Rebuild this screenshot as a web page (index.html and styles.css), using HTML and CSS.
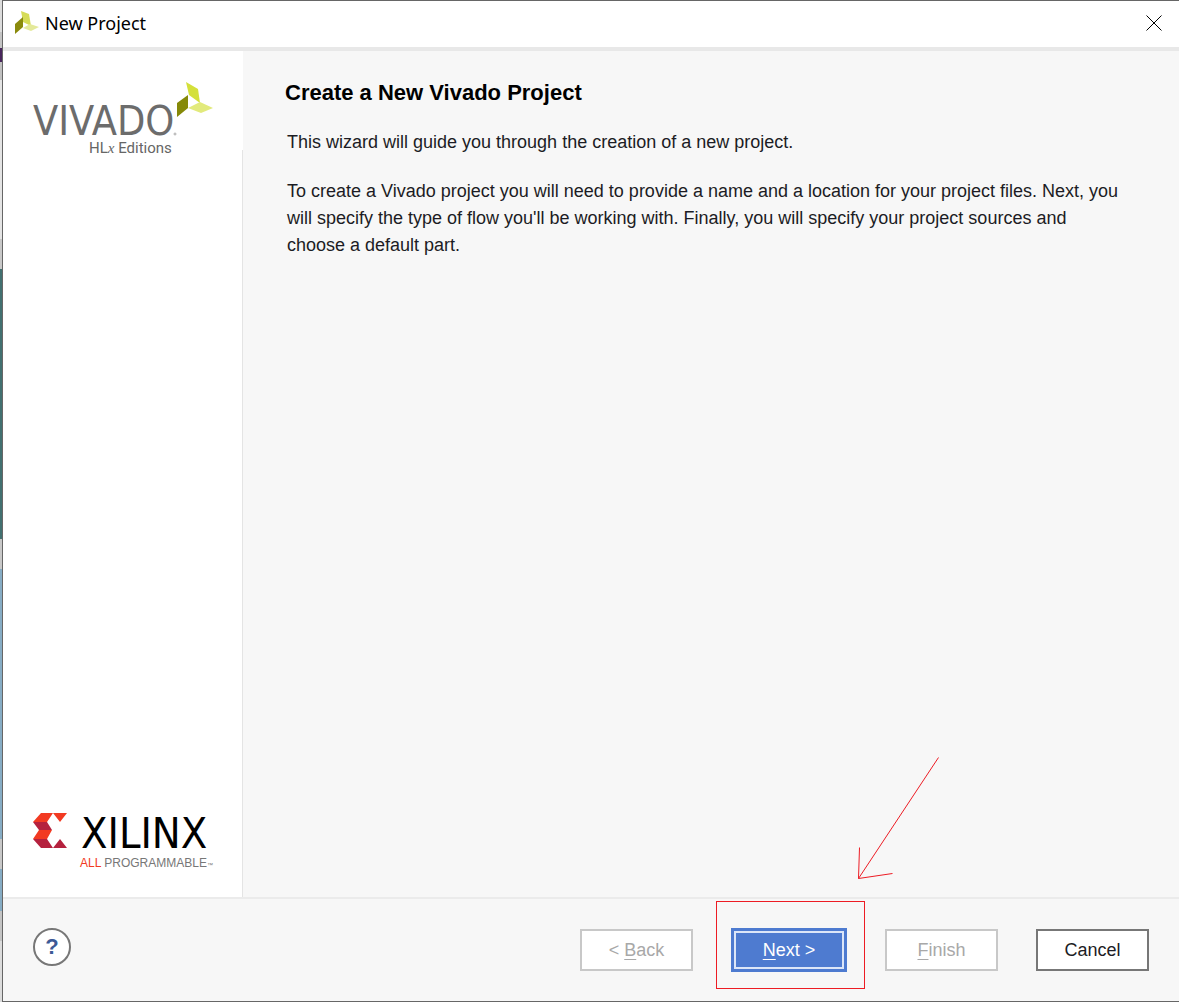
FILE: index.html
```html
<!DOCTYPE html>
<html lang="en">
<head>
<meta charset="utf-8">
<meta name="viewport" content="width=device-width, initial-scale=1">
<title>New Project</title>
<link rel="stylesheet" href="styles.css">
</head>
<body>
<div class="desktop">
  <main class="window">
    <header class="titlebar">
      <svg class="app-icon" viewBox="0 0 24 24" aria-hidden="true">
        <path d="M6 0l8 3 2 12-8-4z" fill="#d6dc58"/>
        <path d="M0 13l8-7v10l-8 7z" fill="#8a8a0c"/>
        <path d="M8 17l7-4 9 3-8 4z" fill="#e4e99a"/>
      </svg>
      <h1 class="window-title">New Project</h1>
      <button class="close" type="button" aria-label="Close">
        <svg class="close-icon" viewBox="0 0 16 16" aria-hidden="true"><path d="M.5 .5l15 15M15.500 .5l-15 15" stroke="#000" fill="none"/></svg>
      </button>
    </header>
    <div class="content">
      <aside class="sidebar">
        <svg class="vivado" viewBox="0 0 182 76" role="img" aria-label="Vivado HLx Editions">
          <text class="vivado-name" x="0" y="54">VIVADO</text>
          <text class="vivado-edition" x="56" y="72">HL<tspan class="vivado-x">x</tspan> Editions</text>
          <path d="M153 1l12 7 2 14-11-8z" fill="#d4e03a"/>
          <path d="M144 22l11-8v13l-11 9z" fill="#858908"/>
          <path d="M155 27l12-6 13 6-12 5z" fill="#e2ea7c"/>
          <circle cx="142" cy="53" r="1" fill="none" stroke="#aaa"/>
        </svg>
        <svg class="xilinx" viewBox="0 0 182 60" role="img" aria-label="Xilinx All Programmable">
          <path d="M8 1h12l-6 9H0zM6 18h13l-5 9H0zM20 1h14l-7 9z" fill="#f23a22"/>
          <path d="M0 10h14l5 8H6zM0 27h14l6 9H8zM20 36h14l-7-9z" fill="#b5213e"/>
          <text class="xilinx-name" x="48" y="36">XILINX</text>
          <text class="xilinx-tag" x="47" y="55"><tspan class="xilinx-all">ALL</tspan> PROGRAMMABLE<tspan class="xilinx-tm">™</tspan></text>
        </svg>
      </aside>
      <section class="intro">
        <h2 class="heading">Create a New Vivado Project</h2>
        <p class="para">This wizard will guide you through the creation of a new project.</p>
        <p class="para">To create a Vivado project you will need to provide a name and a location for your project files. Next, you will specify the type of flow you'll be working with. Finally, you will specify your project sources and choose a default part.</p>
      </section>
    </div>
    <footer class="footer">
      <button class="help" type="button" aria-label="Help">?</button>
      <div class="actions">
        <button class="btn" type="button" disabled>&lt; <u>B</u>ack</button>
        <div class="callout">
          <button class="btn btn-primary" type="button"><u>N</u>ext &gt;</button>
          <span class="callout-box"></span>
          <svg class="callout-arrow" viewBox="0 0 82 123" aria-hidden="true"><path d="M81.500 .5L1.500 121.500M2.500 90.500L1.500 121.500L35.500 116.500" stroke="#ed1c24" fill="none"/></svg>
        </div>
        <button class="btn" type="button" disabled><u>F</u>inish</button>
        <button class="btn" type="button">Cancel</button>
      </div>
    </footer>
  </main>
</div>
</body>
</html>
```
FILE: styles.css
```css
* { box-sizing: border-box; }

body {
  margin: 0;
  font-family: "Liberation Sans", Arial, sans-serif;
  color: #1c1c24;
}

.desktop {
  min-height: 100vh;
  display: flex;
  padding-left: 2px;
  background: linear-gradient(#dcdcdc 0 32px, #c4c4c4 32px 48px, #48265c 48px 62px, #c0c0c0 62px 80px, #e4e4e4 80px 239px, #c8c8c8 239px 269px, #427070 269px 539px, #c8c8c8 539px 569px, #86acc4 569px 839px, #c8c8c8 839px 869px, #86acc4 869px 911px, #c4c4c4 911px 941px, #dcdcdc 941px);
}

.window {
  flex: 1;
  display: flex;
  flex-direction: column;
  border: solid #666;
  border-width: 1px 0 1px 1px;
  background: #f7f7f7;
}

.titlebar {
  display: flex;
  align-items: center;
  height: 50px;
  padding: 0 17px 2px 12px;
  border-bottom: 4px solid #e8e8e8;
  background: #fff;
}

.app-icon { width: 24px; height: 24px; }

.window-title {
  flex: 1;
  margin: 0 0 0 6px;
  font: 18px/24px "Noto Sans", "Open Sans", sans-serif;
  color: #000;
}

.close {
  display: flex;
  padding: 0;
  border: 0;
  background: none;
}

.close-icon { width: 16px; height: 16px; }

.content { flex: 1; display: flex; }

.sidebar {
  display: flex;
  flex-direction: column;
  justify-content: space-between;
  flex: none;
  width: 240px;
  padding: 30px 28px 25px 30px;
  border-right: 1px solid;
  border-image: linear-gradient(#fff 100px, #e4e4e4 100px) 1;
  background: #fff;
}

.vivado { width: 182px; height: 76px; }
.vivado-name { font: 41px "DejaVu Sans Condensed", "DejaVu Sans", sans-serif; fill: #6c6c6c; }
.vivado-edition { font: 15px Roboto, sans-serif; fill: #666; }
.vivado-x { font-family: "Liberation Serif", serif; font-style: italic; }

.xilinx { width: 182px; height: 60px; }
.xilinx-name { font: 43px "DejaVu Sans Condensed", "DejaVu Sans", sans-serif; fill: #000; }
.xilinx-tag { font: 12px "Liberation Sans", Arial, sans-serif; fill: #777; }
.xilinx-all { fill: #f23a22; }
.xilinx-tm { font-size: 6px; }

.intro { flex: 1; padding: 28px 42px; }

.heading {
  margin: 0 0 22px;
  font: bold 22px/28px "Liberation Sans", Arial, sans-serif;
  color: #000;
}

.para {
  max-width: 844px;
  margin: 0 0 22px;
  padding-left: 2px;
  font-size: 18px;
  line-height: 27px;
}

.footer {
  display: flex;
  align-items: flex-start;
  justify-content: space-between;
  height: 104px;
  padding: 29px 30px 0;
  border-top: 2px solid #ebebeb;
}

.help {
  width: 38px;
  height: 38px;
  padding: 0;
  border: 2px solid #777;
  border-radius: 50%;
  background: #fff;
  font: bold 22px "Liberation Sans", Arial, sans-serif;
  color: #3c5a96;
}

.actions { display: flex; align-items: center; gap: 38px; }

.btn {
  width: 113px;
  height: 42px;
  padding: 0;
  border: 2px solid #777;
  background: #fff;
  font: 18px "Liberation Sans", Arial, sans-serif;
  color: #1c1c24;
}

.btn:disabled { border-color: #c8c8c8; color: #a8a8a8; }

.btn u { text-underline-offset: 3px; text-decoration-thickness: 1px; }

.callout { position: relative; }

.btn-primary {
  display: block;
  width: 116px;
  height: 44px;
  border: 3px solid #4e7bd0;
  background: #4e7bd0;
  box-shadow: inset 0 0 0 2px #dce6f8;
  color: #fff;
}

.callout-box {
  position: absolute;
  inset: -27px -18px -17px -15px;
  border: 1px solid #ed1c24;
  pointer-events: none;
}

.callout-arrow {
  position: absolute;
  left: 126px;
  bottom: 92px;
  width: 82px;
  height: 123px;
  pointer-events: none;
}
```
